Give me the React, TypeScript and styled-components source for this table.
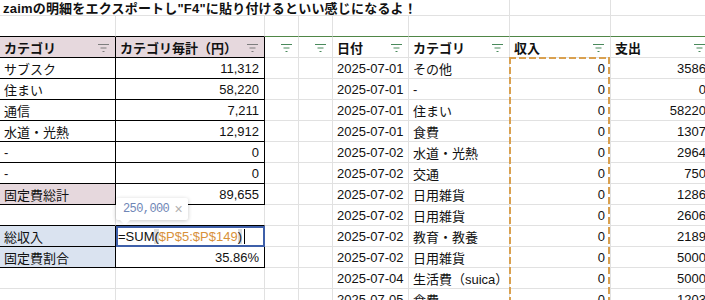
import React from "react";
import styled, { createGlobalStyle } from "styled-components";

const GRID = "#e1e1e1";
const INK = "#000";
const GREEN = "#4f8646";
const PINK = "#e6d8dd";
const BLUE = "#dae3f0";
const ORANGE = "#d9a04f";
const ICON_GREY = "#7d7d7d";
const ICON_GREEN = "#4a8a5c";

const GlobalStyle = createGlobalStyle`
  html, body {
    margin: 0;
    padding: 0;
    background: #fff;
    overflow: hidden;
  }
  body {
    font-family: "Liberation Sans", "Noto Sans CJK JP", sans-serif;
    font-size: 13px;
    color: #111;
  }
`;

const Sheet = styled.div`
  position: relative;
  display: grid;
  grid-template-columns: 116px 149px 34px 34px 76px 101px 101px 101px;
  grid-template-rows: 16px;
  grid-auto-rows: 21px;
  width: 712px;
`;

interface CellProps {
  $align?: "left" | "right" | "split";
  $bold?: boolean;
  $bg?: string;
  $right?: string;
  $bottom?: string;
}

const Cell = styled.div<CellProps>`
  box-sizing: border-box;
  display: flex;
  align-items: center;
  justify-content: ${(p) =>
    p.$align === "right" ? "flex-end" : p.$align === "split" ? "space-between" : "flex-start"};
  padding: 0 5px 0 4px;
  white-space: nowrap;
  overflow: hidden;
  font-weight: ${(p) => (p.$bold ? 700 : 400)};
  background: ${(p) => p.$bg ?? "transparent"};
  border-right: 1px solid ${(p) => p.$right ?? GRID};
  border-bottom: 1px solid ${(p) => p.$bottom ?? GRID};
`;

const TitleCell = styled(Cell)`
  grid-column: span 6;
  padding-left: 3px;
  overflow: visible;
  font-weight: 700;
  letter-spacing: 0.2px;
`;

const HeadCell = styled(Cell)`
  font-weight: 700;
  padding-right: 6px;
  svg {
    margin-top: 2px;
    flex: none;
  }
`;

const EditCell = styled(Cell)`
  position: relative;
  overflow: visible;
  padding-left: 2px;
  &::after {
    content: "";
    position: absolute;
    inset: 0 -1px -1px 0;
    border: 2px solid #3e5fa9;
    pointer-events: none;
  }
`;

const Ref = styled.span`
  color: #d8913a;
`;

const Paren = styled.span`
  background: #dcdcdc;
`;

const Caret = styled.span`
  display: inline-block;
  width: 1px;
  height: 15px;
  margin-left: 2px;
  background: #000;
`;

const Marquee = styled.div`
  position: absolute;
  left: 509px;
  top: 57px;
  width: 101px;
  height: 260px;
  pointer-events: none;
  background:
    repeating-linear-gradient(to bottom, ${ORANGE} 0 7px, transparent 7px 10px) left top / 2px 100% no-repeat,
    repeating-linear-gradient(to bottom, ${ORANGE} 0 7px, transparent 7px 10px) right top / 2px 100% no-repeat,
    repeating-linear-gradient(to right, ${ORANGE} 0 7px, transparent 7px 10px) left top / 100% 2px no-repeat;
`;

const Tip = styled.div`
  position: absolute;
  left: 116px;
  top: 198px;
  box-sizing: border-box;
  width: 72px;
  height: 22px;
  padding: 0 6px 0 7px;
  display: flex;
  align-items: center;
  justify-content: space-between;
  background: #fff;
  border-radius: 2px;
  box-shadow: 0 1px 4px rgba(0, 0, 0, 0.22);
  font-family: "Liberation Mono", monospace;
  font-size: 12px;
  letter-spacing: -0.6px;
  color: #6f86b6;
  &::after {
    content: "";
    position: absolute;
    left: 4px;
    bottom: -5px;
    border-left: 5px solid transparent;
    border-right: 5px solid transparent;
    border-top: 5px solid #fff;
  }
`;

const TipClose = styled.span`
  font-family: "Liberation Sans", sans-serif;
  font-size: 14px;
  color: #b0b0b0;
`;

const FilterIcon = ({ color }: { color: string }) => (
  <svg width="11" height="8" viewBox="0 0 11 8">
    <path d="M0 0.5h11M2.5 4h6M4.5 7.5h2" stroke={color} strokeWidth="1" fill="none" />
  </svg>
);

type LeftRow = { label: string; value?: string; tone?: string; editing?: boolean } | null;

const leftRows: LeftRow[] = [
  { label: "サブスク", value: "11,312" },
  { label: "住まい", value: "58,220" },
  { label: "通信", value: "7,211" },
  { label: "水道・光熱", value: "12,912" },
  { label: "-", value: "0" },
  { label: "-", value: "0" },
  { label: "固定費総計", value: "89,655", tone: PINK },
  null,
  { label: "総収入", tone: BLUE, editing: true },
  { label: "固定費割合", value: "35.86%", tone: BLUE },
  null,
  null,
];

const rightRows = [
  ["2025-07-01", "その他", "0", "3586"],
  ["2025-07-01", "-", "0", "0"],
  ["2025-07-01", "住まい", "0", "58220"],
  ["2025-07-01", "食費", "0", "1307"],
  ["2025-07-02", "水道・光熱", "0", "2964"],
  ["2025-07-02", "交通", "0", "750"],
  ["2025-07-02", "日用雑貨", "0", "1286"],
  ["2025-07-02", "日用雑貨", "0", "2606"],
  ["2025-07-02", "教育・教養", "0", "2189"],
  ["2025-07-02", "日用雑貨", "0", "5000"],
  ["2025-07-04", "生活費（suica）", "0", "5000"],
  ["2025-07-05", "食費", "0", "1203"],
];

const App = () => {
  return (
    <>
      <GlobalStyle />
      <Sheet>
        <TitleCell>zaimの明細をエクスポートし"F4"に貼り付けるといい感じになるよ！</TitleCell>
        <Cell />
        <Cell />

        <Cell $bottom={INK} />
        <Cell $bottom={INK} />
        {Array.from({ length: 6 }).map((_, i) => (
          <Cell key={i} $bottom={GREEN} />
        ))}

        <HeadCell $align="split" $bg={PINK} $right={INK} $bottom={INK}>
          カテゴリ
          <FilterIcon color={ICON_GREY} />
        </HeadCell>
        <HeadCell $align="split" $bg={PINK} $right={INK} $bottom={INK}>
          カテゴリ毎計（円）
          <FilterIcon color={ICON_GREY} />
        </HeadCell>
        <HeadCell $align="right">
          <FilterIcon color={ICON_GREEN} />
        </HeadCell>
        <HeadCell $align="right">
          <FilterIcon color={ICON_GREEN} />
        </HeadCell>
        {["日付", "カテゴリ", "収入", "支出"].map((h) => (
          <HeadCell key={h} $align="split">
            {h}
            <FilterIcon color={ICON_GREEN} />
          </HeadCell>
        ))}

        {leftRows.map((row, i) => {
          const next = leftRows[i + 1];
          const bottom = row || next ? INK : GRID;
          const right = row ? INK : GRID;
          const [date, cat, income, spend] = rightRows[i];
          return (
            <React.Fragment key={i}>
              <Cell $bg={row?.tone} $right={right} $bottom={bottom}>
                {row?.label}
              </Cell>
              {row?.editing ? (
                <EditCell $right={right} $bottom={bottom}>
                  =SUM<Paren>(</Paren>
                  <Ref>$P$5:$P$149</Ref>
                  <Paren>)</Paren>
                  <Caret />
                </EditCell>
              ) : (
                <Cell $align="right" $right={right} $bottom={bottom}>
                  {row?.value}
                </Cell>
              )}
              <Cell />
              <Cell />
              <Cell>{date}</Cell>
              <Cell>{cat}</Cell>
              <Cell $align="right">{income}</Cell>
              <Cell $align="right">{spend}</Cell>
            </React.Fragment>
          );
        })}

        <Marquee />
        <Tip>
          250,000
          <TipClose>×</TipClose>
        </Tip>
      </Sheet>
    </>
  );
};

export default App;
